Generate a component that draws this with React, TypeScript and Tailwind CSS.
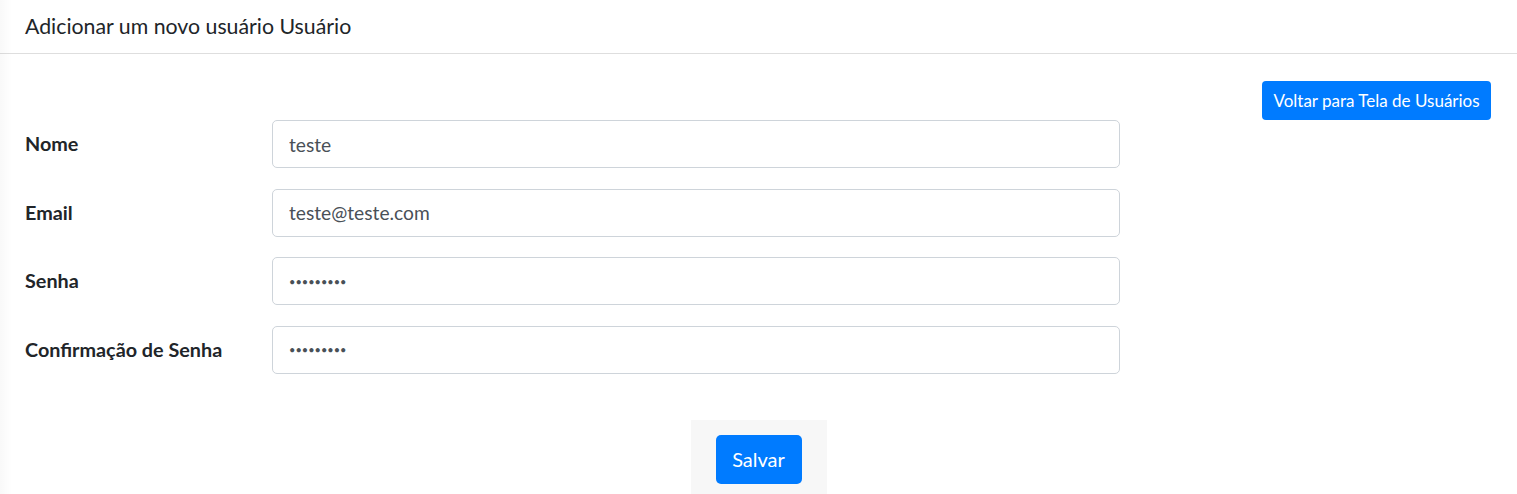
import { useState } from "react";

const fields = [
  { label: "Nome", type: "text", value: "teste" },
  { label: "Email", type: "email", value: "teste@teste.com" },
  { label: "Senha", type: "password", value: "123456789" },
  { label: "Confirmação de Senha", type: "password", value: "123456789" },
];

export default function App() {
  const [values, setValues] = useState(fields.map((f) => f.value));

  return (
    <main
      className="relative min-h-screen bg-white text-[#212529]"
      style={{ fontFamily: "Lato, 'Noto Sans', sans-serif" }}
    >
      {/* sombra leve da lateral */}
      <div className="pointer-events-none absolute inset-y-0 left-0 w-3 bg-gradient-to-r from-black/[0.025] to-transparent" />

      <div className="flex h-[54px] items-center border-b border-[#dedede] px-[25px]">
        <h1 className="text-[21.3px] leading-none">Adicionar um novo usuário Usuário</h1>
      </div>

      <div className="flex justify-end pr-[26px] pt-[27px]">
        <button className="h-[39px] w-[229px] rounded-[4px] bg-[#007bff] text-[17px] text-white">
          Voltar para Tela de Usuários
        </button>
      </div>

      <form className="flex flex-col gap-[20.5px] pl-[25px]">
        {fields.map((f, i) => (
          <div key={f.label} className="flex items-center">
            <label className="w-[247px] text-[19.8px] font-bold">{f.label}</label>
            <input
              type={f.type}
              value={values[i]}
              onChange={(e) => {
                const next = [...values];
                next[i] = e.target.value;
                setValues(next);
              }}
              className={`h-12 w-[848px] rounded-[5px] border border-[#ced4da] px-4 text-[#495057] outline-none ${
                f.type === "password" ? "text-[11px]" : "text-[19.2px]"
              }`}
            />
          </div>
        ))}
      </form>

      <div className="flex justify-center pt-[46px]">
        <div className="flex h-[80px] w-[136px] items-start justify-center bg-[#f7f7f7] pt-[15px]">
          <button className="h-[49px] w-[86px] rounded-[5px] bg-[#007bff] text-[20px] text-white">
            Salvar
          </button>
        </div>
      </div>
    </main>
  );
}
